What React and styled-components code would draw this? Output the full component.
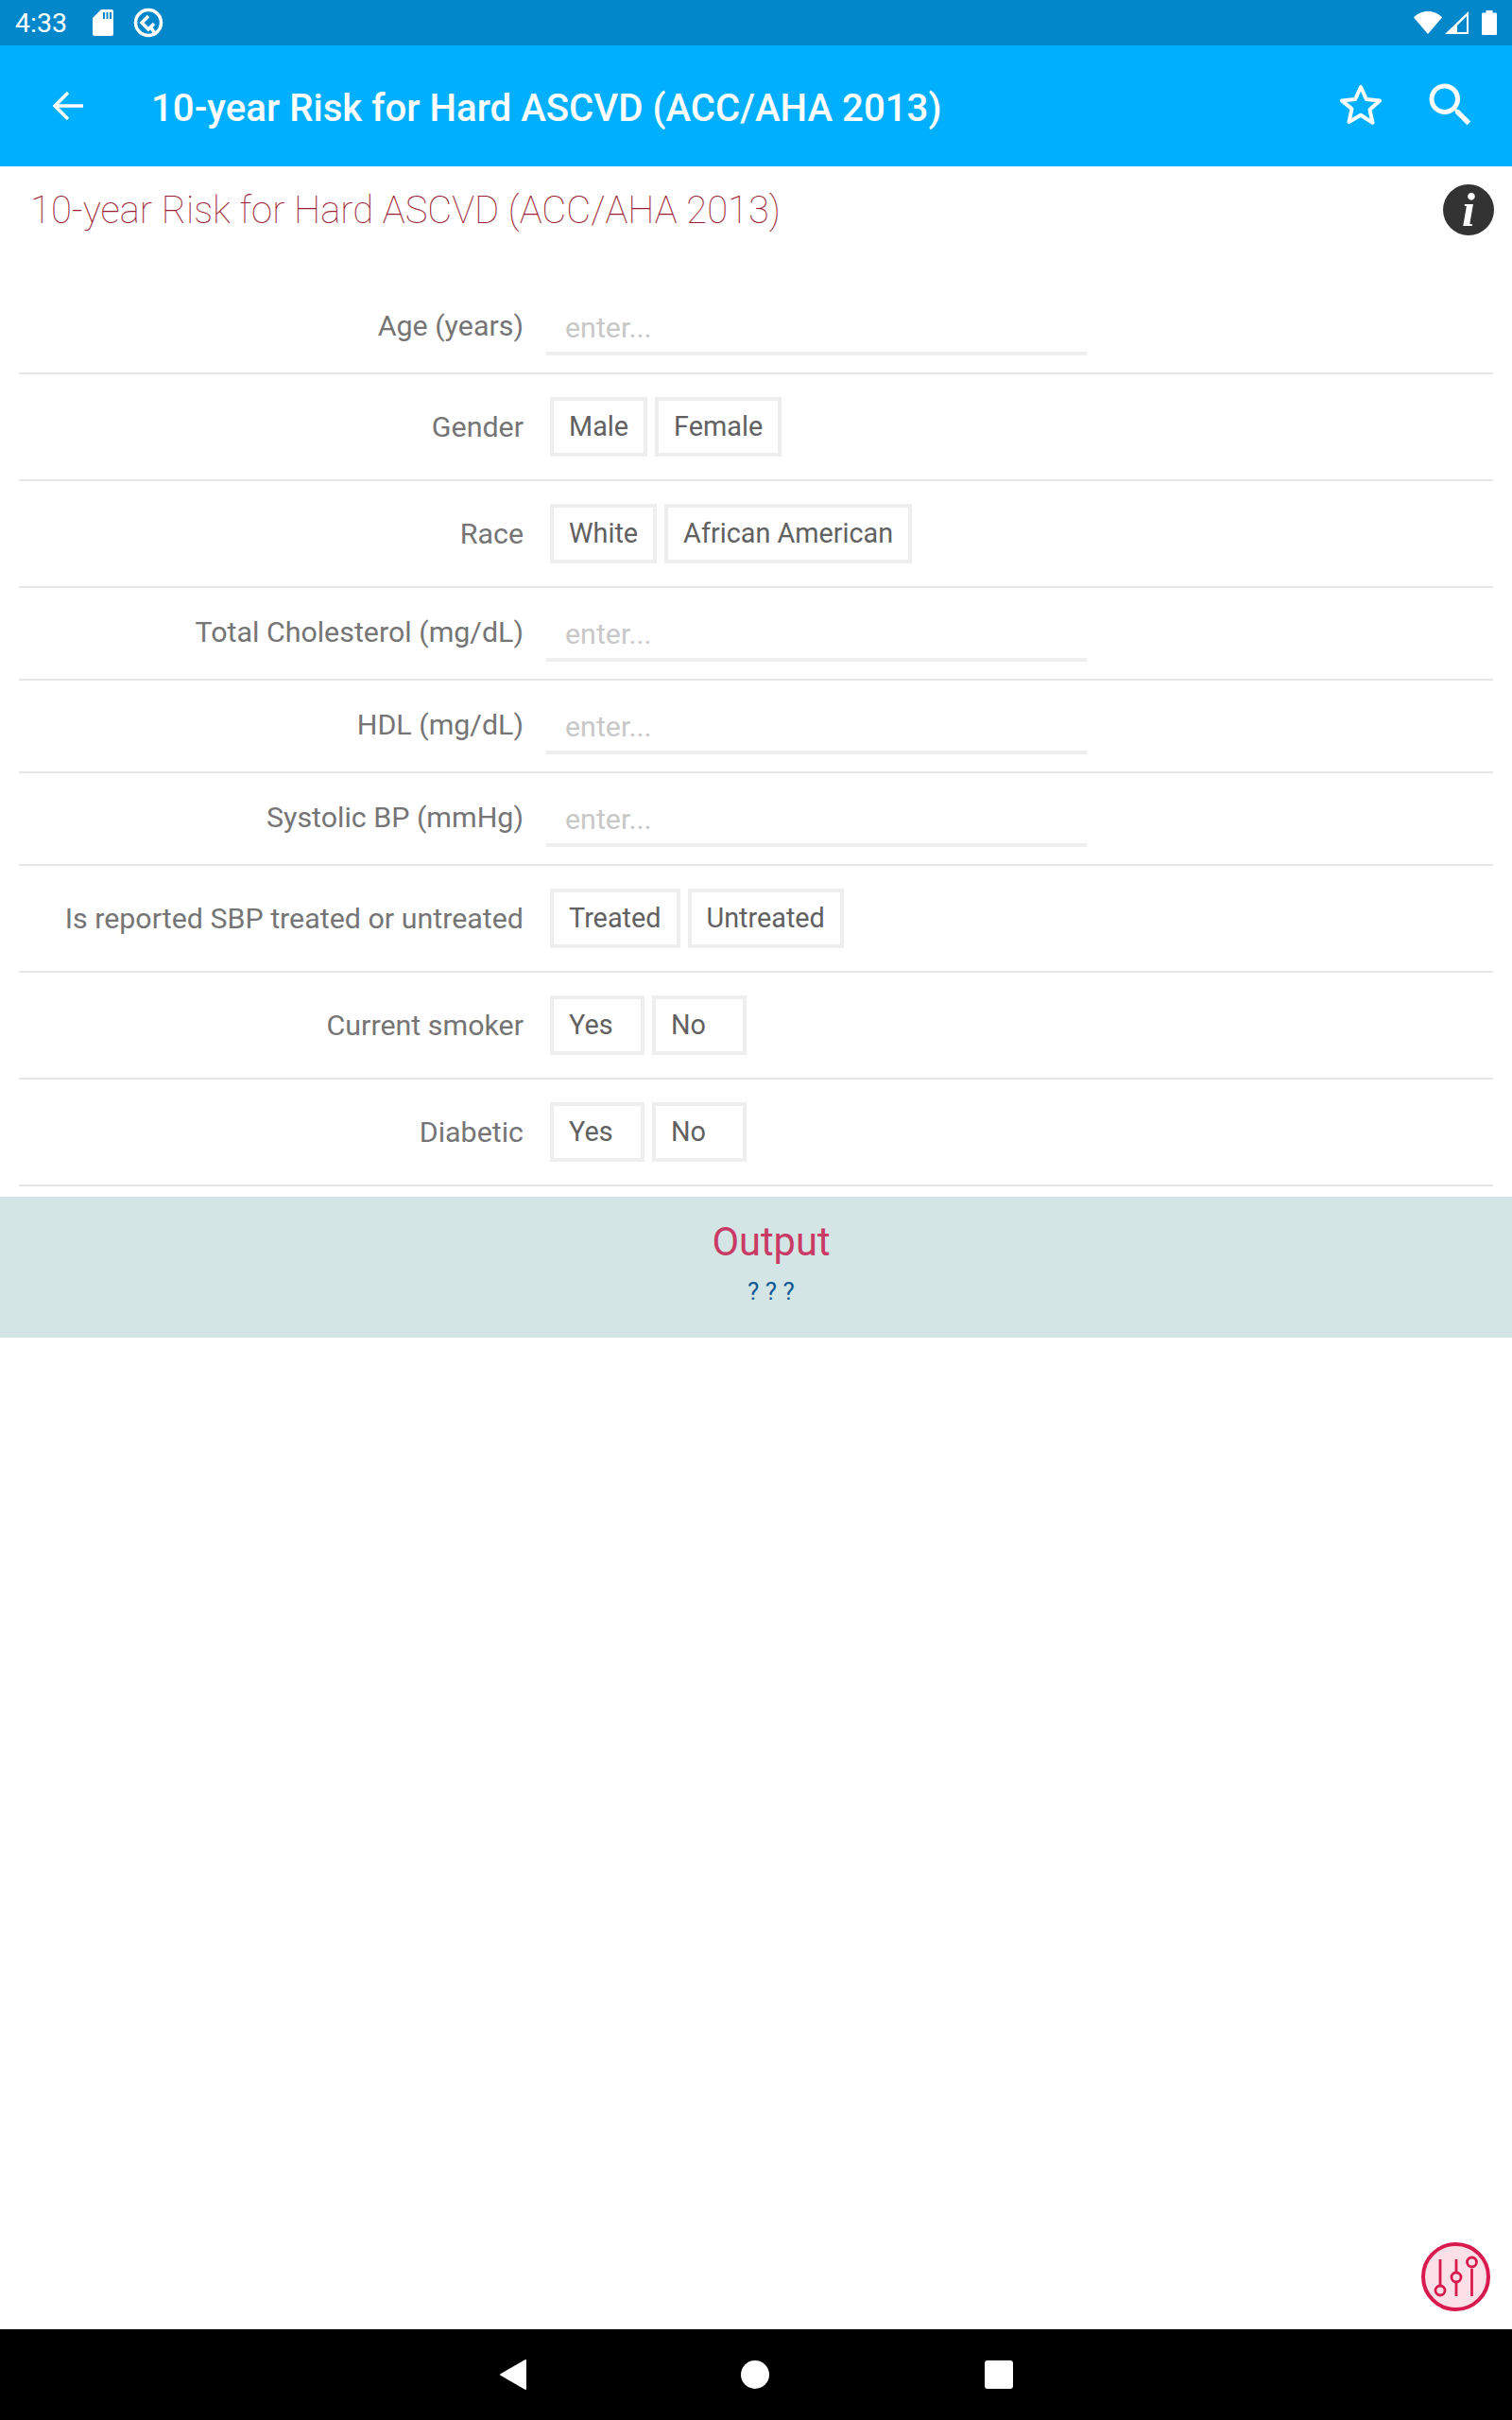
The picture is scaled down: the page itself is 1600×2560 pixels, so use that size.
import React from "react";
import styled, { createGlobalStyle } from "styled-components";

const Global = createGlobalStyle`
  html, body { margin: 0; padding: 0; background: #fff; }
  * { box-sizing: border-box; }
  body { font-family: Roboto, "Liberation Sans", sans-serif; }
`;

const Page = styled.div`
  position: relative;
  width: 1600px;
  height: 2560px;
  display: flex;
  flex-direction: column;
  overflow: hidden;
`;

const StatusBar = styled.div`
  height: 48px;
  background: #0288ca;
  display: flex;
  align-items: center;
  padding: 0 16px;
  color: #fff;
  font-size: 28.5px;
`;
const StatusTime = styled.span`
  width: 61px;
`;
const StatusLeft = styled.div`
  display: flex;
  align-items: center;
  gap: 21px;
  flex: 1;
`;
const StatusRight = styled.div`
  display: flex;
  align-items: center;
  gap: 3px;
`;
const BatteryIcon = styled.svg`
  margin-left: 11px;
`;

const AppBar = styled.header`
  height: 128px;
  background: #00b0ff;
  display: flex;
  align-items: center;
  color: #fff;
  padding: 0 35px 0 56px;
`;
const BackBtn = styled.svg`
  flex: none;
  margin-right: 72px;
`;
const AppTitle = styled.h1`
  flex: 1;
  margin: 6px 0 0;
  font-size: 40.2px;
  font-weight: 500;
  line-height: 48px;
`;
const AppActions = styled.div`
  display: flex;
  align-items: center;
  gap: 41px;
  margin-top: -2px;
`;

const TitleRow = styled.div`
  height: 122px;
  display: flex;
  align-items: flex-start;
  justify-content: space-between;
  padding: 19px 19px 0 32px;
`;
const CalcTitle = styled.h2`
  margin: 0;
  font-size: 40px;
  line-height: 56px;
  font-weight: 100;
  color: #9c1f35;
`;
const InfoBadge = styled.div`
  width: 54px;
  height: 54px;
  border-radius: 50%;
  background: #333;
  color: #fff;
  display: flex;
  align-items: center;
  justify-content: center;
  font-family: "Liberation Serif", serif;
  font-style: italic;
  font-weight: 700;
  font-size: 50px;
`;

const Form = styled.div`
  margin: 0 20px;
`;
const Row = styled.div`
  display: grid;
  grid-template-columns: 534px 1fr;
  column-gap: 24px;
  align-items: ${(p) => (p.$input ? "start" : "center")};
  height: ${(p) => (p.$input ? 98 : 113)}px;
  border-bottom: 2px solid #e6e6e6;
`;
const Label = styled.label`
  text-align: right;
  font-size: 30.4px;
  line-height: 40px;
  color: #757575;
  padding-top: ${(p) => (p.$input ? 27 : 0)}px;
`;
const Input = styled.div`
  width: 572px;
  height: 78px;
  padding: 29px 20px 0;
  border-bottom: 4px solid #eeeeee;
  font-size: 30.4px;
  line-height: 40px;
  color: #c8c8c8;
`;
const Options = styled.div`
  display: flex;
  gap: 8px;
  padding-left: 4px;
`;
const Option = styled.div`
  height: 63px;
  min-width: ${(p) => (p.$wide ? 100 : 0)}px;
  padding: 0 16px;
  border: 4px solid #eeeeee;
  font-size: 28.8px;
  line-height: 55px;
  color: #616161;
`;

const Output = styled.section`
  margin-top: 11px;
  height: 149px;
  background: #d3e5e5;
  padding: 23px 0 0 32px;
  text-align: center;
`;
const OutputTitle = styled.div`
  font-size: 41.6px;
  line-height: 50px;
  color: #c93a64;
`;
const OutputValue = styled.div`
  font-size: 26px;
  line-height: 36px;
  margin-top: 9px;
  color: #0f5a94;
`;

const Spacer = styled.div`
  flex: 1;
`;

const Fab = styled.div`
  position: absolute;
  left: 1504px;
  top: 2372px;
  width: 73px;
  height: 73px;
  border-radius: 50%;
  border: 4px solid #d81b4f;
  background: #fbe0e7;
  display: flex;
  align-items: center;
  justify-content: center;
`;

const NavBar = styled.nav`
  height: 96px;
  background: #000;
  display: flex;
  align-items: center;
  justify-content: center;
  gap: 227.5px;
`;

const Star = () => (
  <svg width="48" height="46" viewBox="0 0 48 46">
    <path
      d="M24 4l5.900 13 14.100 1.500-10.500 9.500 3 13.900L24 33.800 11.500 41l3-13.900L4 18.500 18.100 17z"
      fill="none"
      stroke="#fff"
      strokeWidth="4"
      strokeLinejoin="round"
    />
  </svg>
);

const Search = () => (
  <svg width="60" height="60" viewBox="0 0 24 24">
    <path
      fill="#fff"
      d="M15.500 14h-.79l-.28-.27A6.471 6.471 0 0 0 16 9.500 6.500 6.500 0 1 0 9.500 16c1.610 0 3.090-.59 4.230-1.570l.27.28v.79l5 4.990L20.490 19l-4.990-5zm-6 0C7.010 14 5 11.990 5 9.500S7.010 5 9.500 5 14 7.010 14 9.500 11.990 14 9.500 14z"
    />
  </svg>
);

const inputRow = (label) => ({ label });
const rows = [
  inputRow("Age (years)"),
  { label: "Gender", options: ["Male", "Female"] },
  { label: "Race", options: ["White", "African American"] },
  inputRow("Total Cholesterol (mg/dL)"),
  inputRow("HDL (mg/dL)"),
  inputRow("Systolic BP (mmHg)"),
  { label: "Is reported SBP treated or untreated", options: ["Treated", "Untreated"] },
  { label: "Current smoker", options: ["Yes", "No"], wide: true },
  { label: "Diabetic", options: ["Yes", "No"], wide: true },
];

export default function App() {
  return (
    <Page>
      <Global />
      <StatusBar>
        <StatusLeft>
          <StatusTime>4:33</StatusTime>
          <svg width="22" height="28" viewBox="0 0 22 28">
            <path
              fill="#fff"
              fillRule="evenodd"
              d="M9 0h11a2 2 0 0 1 2 2v24a2 2 0 0 1-2 2H2a2 2 0 0 1-2-2V9zM11 3v7h2V3zm3.500 0v7h2V3zM18 3v7h2V3z"
            />
          </svg>
          <svg width="32" height="32" viewBox="0 0 32 32" fill="none" stroke="#fff">
            <circle cx="16" cy="16" r="13.500" strokeWidth="3.500" />
            <path d="M16 9l-7 7 7 7 6-6" strokeWidth="3.500" />
            <path d="M18 20l6 9" strokeWidth="3.500" />
          </svg>
        </StatusLeft>
        <StatusRight>
          <svg width="30" height="24" viewBox="0 0 30 24">
            <path fill="#fff" d="M15 24L0 6.500C3.500 2.500 9 0 15 0s11.500 2.500 15 6.500z" />
          </svg>
          <svg width="25" height="24" viewBox="0 0 25 24">
            <path fill="#fff" fillRule="evenodd" d="M25 0v24H0zM23 5L13 15v7h10z" />
          </svg>
          <BatteryIcon width="16" height="26" viewBox="0 0 16 26">
            <path fill="#fff" d="M4.500 0h7v2.500H15a1 1 0 0 1 1 1V25a1 1 0 0 1-1 1H1a1 1 0 0 1-1-1V3.500a1 1 0 0 1 1-1h3.500z" />
          </BatteryIcon>
        </StatusRight>
      </StatusBar>

      <AppBar>
        <BackBtn width="32" height="32" viewBox="0 0 32 32" fill="none" stroke="#fff" strokeWidth="3.500">
          <path d="M32 16H3M16 2L2 16l14 14" />
        </BackBtn>
        <AppTitle>10-year Risk for Hard ASCVD (ACC/AHA 2013)</AppTitle>
        <AppActions>
          <Star />
          <Search />
        </AppActions>
      </AppBar>

      <TitleRow>
        <CalcTitle>10-year Risk for Hard ASCVD (ACC/AHA 2013)</CalcTitle>
        <InfoBadge>i</InfoBadge>
      </TitleRow>

      <Form>
        {rows.map((r) => (
          <Row key={r.label} $input={!r.options}>
            <Label $input={!r.options}>{r.label}</Label>
            {r.options ? (
              <Options>
                {r.options.map((o) => (
                  <Option key={o} $wide={r.wide}>
                    {o}
                  </Option>
                ))}
              </Options>
            ) : (
              <Input>enter...</Input>
            )}
          </Row>
        ))}
      </Form>

      <Output>
        <OutputTitle>Output</OutputTitle>
        <OutputValue>? ? ?</OutputValue>
      </Output>

      <Spacer />

      <Fab>
        <svg width="56" height="56" viewBox="0 0 56 56" fill="none" stroke="#d81b4f" strokeWidth="2.800">
          <path d="M11 9v28M28 9v14M28 33v15M44.500 19v29" />
          <circle cx="11" cy="42" r="5" />
          <circle cx="28" cy="28" r="5" />
          <circle cx="44.500" cy="12" r="5" />
        </svg>
      </Fab>

      <NavBar>
        <svg width="28" height="32" viewBox="0 0 28 32">
          <path fill="#fff" stroke="#fff" strokeWidth="2" strokeLinejoin="round" d="M27 1v30L1 16z" />
        </svg>
        <svg width="30" height="30" viewBox="0 0 30 30">
          <circle cx="15" cy="15" r="15" fill="#fff" />
        </svg>
        <svg width="30" height="30" viewBox="0 0 30 30">
          <rect width="30" height="30" rx="3" fill="#fff" />
        </svg>
      </NavBar>
    </Page>
  );
}
